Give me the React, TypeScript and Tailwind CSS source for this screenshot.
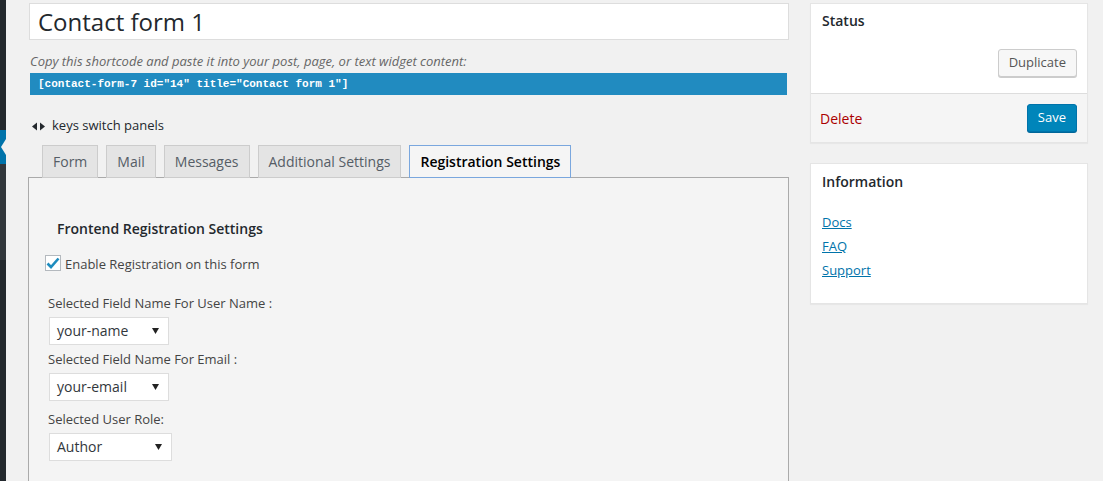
import React from "react";

const font = { fontFamily: '"Open Sans", "Noto Sans", sans-serif' };

function SelectBox({ value, width }: { value: string; width: string }) {
  return (
    <div
      className={`flex h-[28px] items-center justify-between border border-[#dddddd] bg-white pl-[7px] pr-[9px] text-[14px] text-[#32373c] ${width}`}
    >
      <span>{value}</span>
      <svg width="7" height="6" viewBox="0 0 7 6">
        <path d="M0 0 L7 0 L3.5 6 Z" fill="#222" />
      </svg>
    </div>
  );
}

function Tab({ label, active }: { label: string; active?: boolean }) {
  if (active) {
    return (
      <div className="flex h-[33px] items-center border border-[#7aa7de] bg-[#f5f5f5] px-[10px] text-[14px] font-semibold text-[#000]">
        {label}
      </div>
    );
  }
  return (
    <div className="flex h-[33px] items-center border border-[#cccccc] bg-[#e4e4e4] px-[10px] text-[14px] text-[#555d66]">
      {label}
    </div>
  );
}

export default function App() {
  return (
    <div
      className="flex h-[481px] w-[1103px] overflow-hidden bg-[#f1f1f1] text-[#444]"
      style={font}
    >
      {/* admin sidebar strip */}
      <div className="flex w-[6px] shrink-0 flex-col bg-[#23282d]">
        <div className="h-[130px]" />
        <div className="relative h-[34px] bg-[#0073aa]">
          <svg
            className="absolute left-0 top-[8px]"
            width="6"
            height="18"
            viewBox="0 0 6 18"
          >
            <path d="M1 9 L6 1 L6 17 Z" fill="#f1f1f1" />
          </svg>
        </div>
        <div className="h-[96px] bg-[#32373c]" />
        <div className="flex-1" />
      </div>

      {/* main column */}
      <div className="ml-[23px] mt-[3px] flex w-[760px] shrink-0 flex-col">
        <div className="flex h-[37px] items-center border border-[#dddddd] bg-white pl-[8px] text-[24px] text-[#23282d]">
          Contact form 1
        </div>
        <div className="mt-[11px] h-[20px] pl-[1px] text-[13px] italic leading-[20px] text-[#666]">
          Copy this shortcode and paste it into your post, page, or text widget content:
        </div>
        <div
          className="ml-[1px] mr-[2px] mt-[2px] flex h-[22px] items-center bg-[#218bc0] pl-[8px] text-[11px] font-bold text-white"
          style={{ fontFamily: '"Liberation Mono", "DejaVu Sans Mono", monospace' }}
        >
          [contact-form-7 id="14" title="Contact form 1"]
        </div>
        <div className="mt-[21px] flex h-[20px] items-center pl-[3px] text-[13px] text-[#23282d]">
          <svg width="13" height="9" viewBox="0 0 13 9" className="mr-[7px]">
            <path d="M0 4.5 L5 0.5 L5 8.5 Z" fill="#23282d" />
            <path d="M13 4.5 L8 0.5 L8 8.5 Z" fill="#23282d" />
          </svg>
          keys switch panels
        </div>
        <div className="relative z-10 -mb-px mt-[9px] flex items-end gap-[8px] pl-[13px]">
          <Tab label="Form" />
          <Tab label="Mail" />
          <Tab label="Messages" />
          <Tab label="Additional Settings" />
          <Tab label="Registration Settings" active />
        </div>
        <div className="-ml-px flex flex-1 flex-col border border-b-0 border-[#aaaaaa] bg-[#f4f4f4] pl-[16px] text-[13px] text-[#444]">
          <div className="ml-[12px] mt-[41px] h-[20px] text-[14px] font-semibold leading-[20px] text-[#23282d]">
            Frontend Registration Settings
          </div>
          <div className="mt-[13px] flex items-center">
            <div className="flex h-[16px] w-[16px] items-center justify-center border border-[#b4b9be] bg-white">
              <svg width="14" height="12" viewBox="0 0 14 12">
                <path
                  d="M1.5 6.5 L5 10 L12.5 1.5"
                  stroke="#1e8cbe"
                  strokeWidth="2.6"
                  fill="none"
                />
              </svg>
            </div>
            <span className="ml-[4px] mt-[3px] text-[13px] text-[#444]">
              Enable Registration on this form
            </span>
          </div>
          <div className="ml-[3px] mt-[18px] h-[20px] leading-[20px]">
            Selected Field Name For User Name :
          </div>
          <div className="ml-[4px] mt-[4px]">
            <SelectBox value="your-name" width="w-[120px]" />
          </div>
          <div className="ml-[3px] mt-[4px] h-[20px] leading-[20px]">
            Selected Field Name For Email :
          </div>
          <div className="ml-[4px] mt-[4px]">
            <SelectBox value="your-email" width="w-[120px]" />
          </div>
          <div className="ml-[3px] mt-[8px] h-[20px] leading-[20px]">
            Selected User Role:
          </div>
          <div className="ml-[4px] mt-[4px]">
            <SelectBox value="Author" width="w-[123px]" />
          </div>
        </div>
      </div>

      {/* right column */}
      <div className="ml-[21px] mt-[3px] flex w-[278px] shrink-0 flex-col">
        <div className="border border-[#e5e5e5] bg-white shadow-[0_1px_1px_rgba(0,0,0,0.04)]">
          <div className="px-[11px] pt-[7px] text-[14px] font-semibold leading-[20px] text-[#23282d]">
            Status
          </div>
          <div className="flex justify-end px-[10px] pb-[16px] pt-[18px]">
            <div className="flex h-[28px] items-center rounded-[3px] border border-[#cccccc] bg-[#f7f7f7] px-[10px] text-[13px] text-[#555] shadow-[0_1px_0_#cccccc]">
              Duplicate
            </div>
          </div>
          <div className="flex items-center justify-between border-t border-[#dddddd] bg-[#f5f5f5] py-[10px] pl-[9px] pr-[10px]">
            <span className="text-[14px] text-[#a00]">Delete</span>
            <div className="flex h-[28px] items-center rounded-[3px] border border-[#0073aa] bg-[#0085ba] px-[10px] text-[13px] text-white shadow-[0_1px_0_#006799]">
              Save
            </div>
          </div>
        </div>
        <div className="mt-[20px] h-[141px] border border-[#e5e5e5] bg-white px-[11px] shadow-[0_1px_1px_rgba(0,0,0,0.04)]">
          <div className="pt-[8px] text-[14px] font-semibold leading-[20px] text-[#23282d]">
            Information
          </div>
          <div className="mt-[20px] flex flex-col gap-[4px] text-[13px] leading-[20px]">
            <span className="text-[#0073aa] underline">Docs</span>
            <span className="text-[#0073aa] underline">FAQ</span>
            <span className="text-[#0073aa] underline">Support</span>
          </div>
        </div>
      </div>
    </div>
  );
}
